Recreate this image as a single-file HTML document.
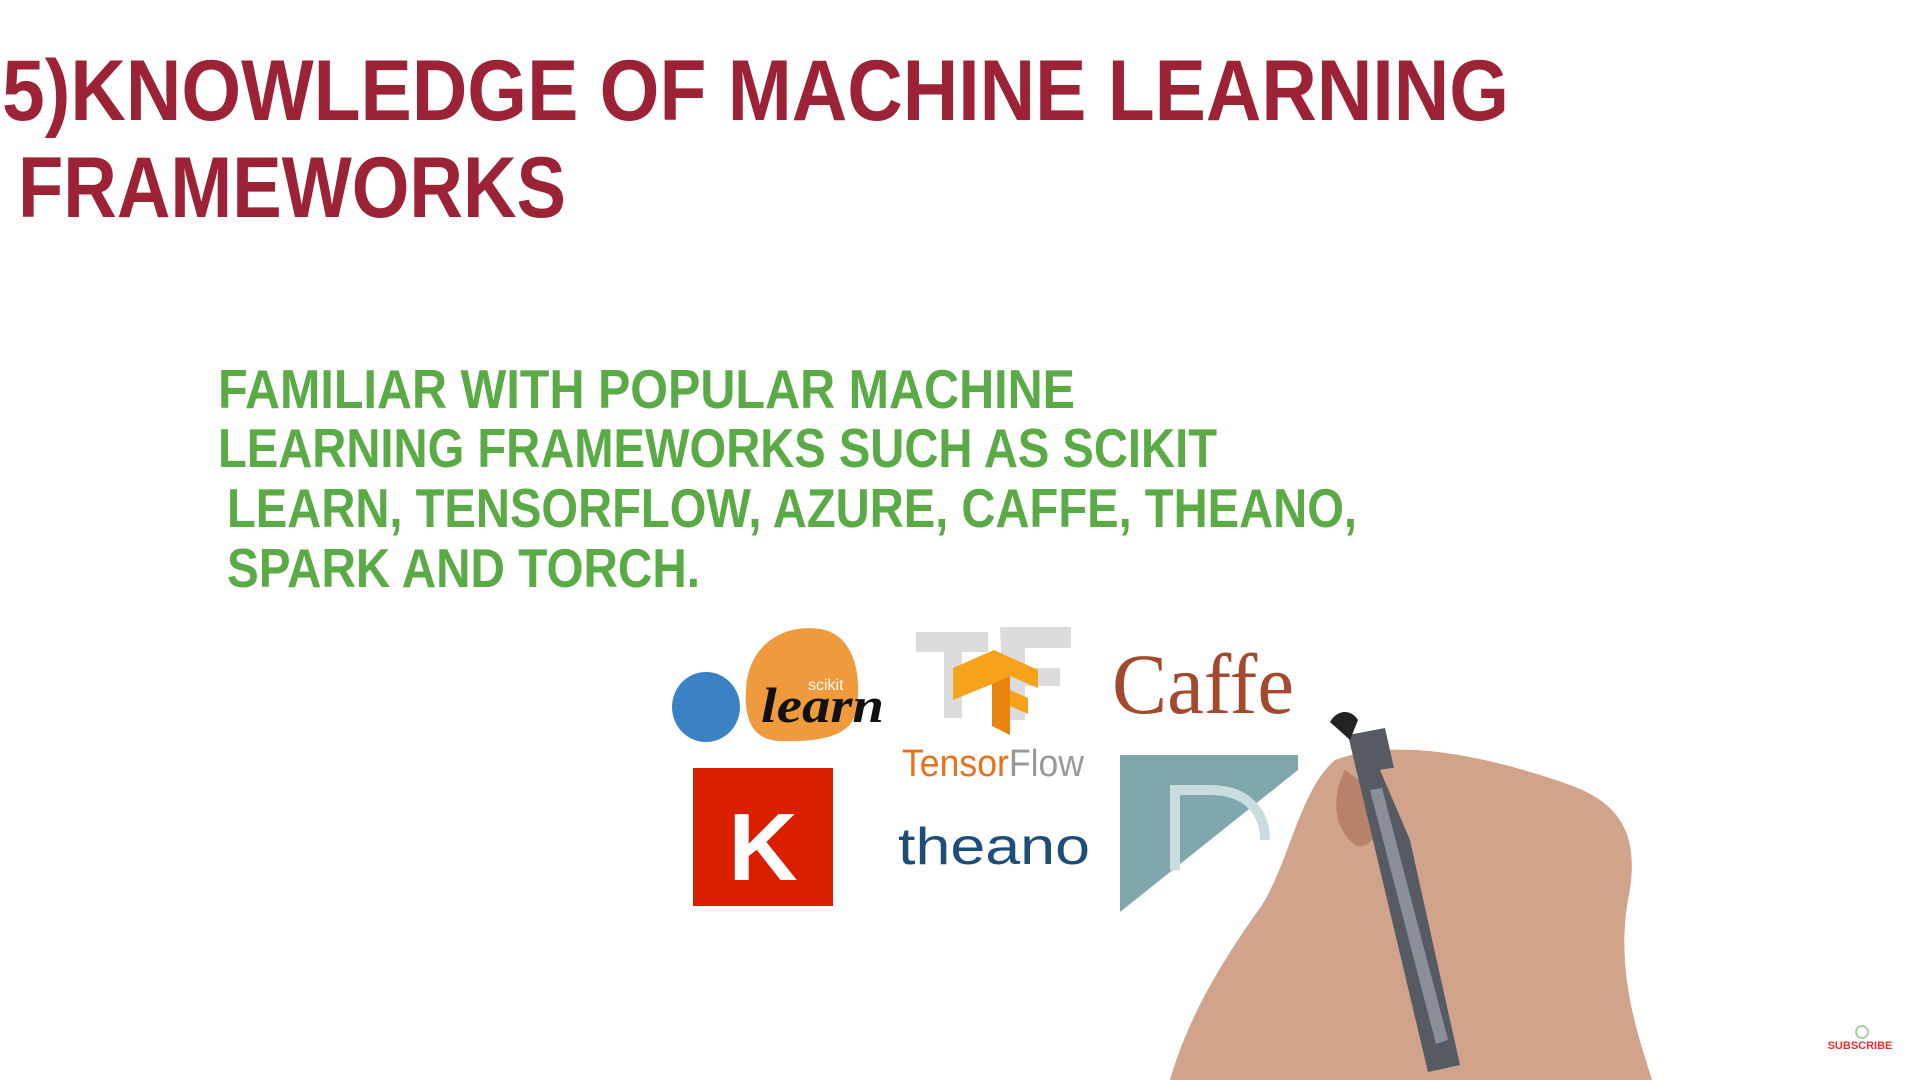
<!DOCTYPE html>
<html><head><meta charset="utf-8"><style>
html,body{margin:0;padding:0;background:#fff;width:1920px;height:1080px;overflow:hidden}
svg{display:block}
</style></head><body>
<svg width="1920" height="1080" viewBox="0 0 1920 1080" xmlns="http://www.w3.org/2000/svg">
<rect width="1920" height="1080" fill="#fff"/>
<g font-family="Liberation Sans, sans-serif" font-weight="bold" fill="#9b2335">
<text x="2" y="120" font-size="86" textLength="1507" lengthAdjust="spacingAndGlyphs">5)KNOWLEDGE OF MACHINE LEARNING</text>
<text x="18" y="217" font-size="86" textLength="548" lengthAdjust="spacingAndGlyphs">FRAMEWORKS</text>
</g>
<g font-family="Liberation Sans, sans-serif" font-weight="bold" fill="#5aaa46" font-size="55">
<text x="218" y="408" textLength="857" lengthAdjust="spacingAndGlyphs">FAMILIAR WITH POPULAR MACHINE</text>
<text x="218" y="467" textLength="999" lengthAdjust="spacingAndGlyphs">LEARNING FRAMEWORKS SUCH AS SCIKIT</text>
<text x="227" y="527" textLength="1130" lengthAdjust="spacingAndGlyphs">LEARN, TENSORFLOW, AZURE, CAFFE, THEANO,</text>
<text x="227" y="587" textLength="473" lengthAdjust="spacingAndGlyphs">SPARK AND TORCH.</text>
</g>
<!-- scikit-learn -->
<ellipse cx="706" cy="707" rx="34" ry="35" fill="#3b82c4"/>
<path d="M746,690 C748,640 790,622 825,630 C860,640 862,690 855,715 C848,738 815,742 780,741 C752,740 744,718 746,690Z" fill="#ef9a3c"/>
<text x="808" y="690" font-family="Liberation Sans, sans-serif" font-size="16" fill="#fff">scikit</text>
<text x="761" y="722" font-family="Liberation Serif, serif" font-style="italic" font-weight="bold" font-size="50" fill="#111" textLength="123" lengthAdjust="spacingAndGlyphs">learn</text>
<!-- TensorFlow -->
<g fill="#dcdcdc">
<path d="M916,632 L988,632 L988,652 L962,652 L962,718 L944,718 L944,652 L916,652Z"/>
<path d="M1000,627 L1071,627 L1071,648 L1025,648 L1025,668 L1060,668 L1060,686 L1025,686 L1025,720 L1004,720Z"/>
</g>
<path d="M953,668 L994,650 L1038,670 L1038,688 L1010,676 L1010,690 L1028,698 L1028,714 L1010,706 L1010,735 L992,726 L992,684 L953,700Z" fill="#f7a21b"/>
<path d="M992,684 L992,726 L1010,735 L1010,676Z" fill="#ea8410"/>
<text x="902" y="776" font-family="Liberation Sans, sans-serif" font-size="38" textLength="182" lengthAdjust="spacingAndGlyphs"><tspan fill="#e8711d">Tensor</tspan><tspan fill="#999">Flow</tspan></text>
<!-- Caffe -->
<text x="1112" y="713" font-family="Liberation Serif, serif" font-size="86" fill="#a3492d" textLength="182" lengthAdjust="spacingAndGlyphs">Caffe</text>
<!-- Keras -->
<rect x="693" y="768" width="140" height="138" fill="#d91f00"/>
<text x="763" y="880" text-anchor="middle" font-family="Liberation Sans, sans-serif" font-weight="bold" font-size="96" fill="#fff">K</text>
<!-- theano -->
<text x="898" y="864" font-family="Liberation Sans, sans-serif" font-size="52" fill="#1d4d78" textLength="192" lengthAdjust="spacingAndGlyphs">theano</text>
<!-- D block -->
<path d="M1120,755 L1298,755 L1298,770 L1120,912Z" fill="#7ea8ae"/>
<path d="M1175,870 L1175,790 L1210,790 C1250,790 1265,815 1265,840" fill="none" stroke="#c9dcde" stroke-width="10"/>
<!-- hand -->
<path d="M1335,760 C1400,735 1500,760 1570,785 C1625,805 1640,840 1628,900 C1615,975 1640,1040 1652,1080 L1170,1080 C1190,1010 1230,950 1262,905 C1290,860 1300,790 1335,760Z" fill="#d1a38a"/>
<path d="M1345,770 C1330,800 1335,830 1355,845 C1372,852 1385,825 1380,795Z" fill="#b8826a"/>
<path d="M1348,735 L1385,728 L1460,1065 L1428,1072Z" fill="#555a63"/>
<path d="M1370,790 L1382,788 L1448,1040 L1436,1044Z" fill="#8a9099"/>
<path d="M1330,722 C1338,708 1352,710 1358,720 L1350,740Z" fill="#222"/>
<path d="M1380,770 C1420,760 1455,790 1470,830 C1475,855 1440,860 1410,840Z" fill="#d1a38a"/>
<text x="1860" y="1049" text-anchor="middle" font-family="Liberation Sans, sans-serif" font-weight="bold" font-size="11" fill="#e03030">SUBSCRIBE</text>
<circle cx="1862" cy="1032" r="6" fill="none" stroke="#8c8" stroke-width="1.5"/>
</svg>
</body></html>
